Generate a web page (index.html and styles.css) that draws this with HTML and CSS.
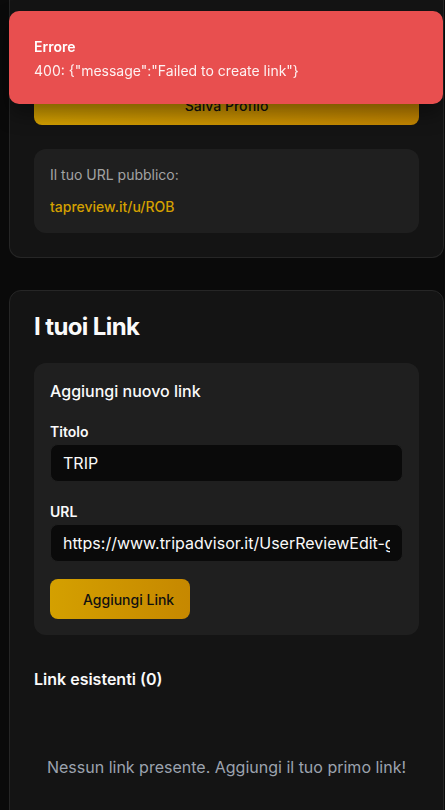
FILE: index.html
```html
<!DOCTYPE html>
<html lang="it">
<head>
<meta charset="utf-8">
<title>Dashboard</title>
<link rel="stylesheet" href="styles.css">
</head>
<body>
<main class="page">
  <section class="card card-top">
    <button class="btn-save" type="button">Salva Profilo</button>
    <div class="url-box">
      <p class="url-label">Il tuo URL pubblico:</p>
      <a class="url-link" href="#">tapreview.it/u/ROB</a>
    </div>
  </section>

  <section class="card card-links">
    <h2 class="card-title">I tuoi Link</h2>
    <div class="add-box">
      <h3 class="add-title">Aggiungi nuovo link</h3>
      <div class="field">
        <label class="field-label">Titolo</label>
        <input class="field-input" type="text" value="TRIP">
      </div>
      <div class="field">
        <label class="field-label">URL</label>
        <input class="field-input" type="text" value="https://www.tripadvisor.it/UserReviewEdit-g187791">
      </div>
      <button class="btn-add" type="button"><span class="btn-icon"></span>Aggiungi Link</button>
    </div>
    <h3 class="exist-title">Link esistenti (0)</h3>
    <p class="empty">Nessun link presente. Aggiungi il tuo primo link!</p>
  </section>
</main>

<div class="toast">
  <div class="toast-title">Errore</div>
  <div class="toast-msg">400: {"message":"Failed to create link"}</div>
</div>
</body>
</html>
```

FILE: styles.css
```css
* { box-sizing: border-box; }
html, body { margin: 0; padding: 0; }
body {
  background: #0a0a0a;
  font-family: Inter, "Noto Sans", sans-serif;
  color: #fafafa;
  overflow: hidden;
  height: 810px;
}
.page {
  padding: 0 1px 0 9px;
  display: flex;
  flex-direction: column;
  gap: 32px;
}
.card {
  background: #141414;
  border: 1px solid #262626;
  border-radius: 12px;
  padding: 24px;
}
.card-top {
  border-top: none;
  border-radius: 0 0 12px 12px;
  padding-top: 85px;
  display: flex;
  flex-direction: column;
  gap: 24px;
}
.btn-save {
  height: 40px;
  border: none;
  border-radius: 8px;
  background: linear-gradient(90deg, #d4a000, #c48600);
  color: #111;
  font-family: inherit;
  font-size: 14px;
  font-weight: 500;
}
.url-box {
  background: #1f1f1f;
  border-radius: 12px;
  padding: 16px;
  display: flex;
  flex-direction: column;
}
.url-label {
  margin: 0 0 12px;
  font-size: 14px;
  line-height: 20px;
  color: #a3a3a3;
}
.url-link {
  font-size: 14px;
  line-height: 20px;
  font-weight: 500;
  color: #d4a000;
  text-decoration: none;
}
.card-links { padding-top: 20px; }
.card-title {
  margin: 0 0 20px;
  font-size: 24px;
  line-height: 32px;
  font-weight: 700;
  letter-spacing: -0.6px;
}
.add-box {
  background: #1f1f1f;
  border-radius: 12px;
  padding: 16px;
  display: flex;
  flex-direction: column;
}
.add-title {
  margin: 0 0 19px;
  font-size: 16px;
  line-height: 24px;
  font-weight: 500;
}
.field {
  display: flex;
  flex-direction: column;
  gap: 2px;
  margin-bottom: 20px;
}
.field + .field { margin-bottom: 17px; }
.field-label {
  font-size: 14px;
  line-height: 20px;
  font-weight: 600;
}
.field-input {
  height: 38px;
  border: 1px solid #1f1f1f;
  border-radius: 8px;
  background: #0a0a0a;
  color: #fafafa;
  font-family: inherit;
  font-size: 16px;
  padding: 0 12px;
  outline: none;
  width: 100%;
}
.btn-add {
  align-self: flex-start;
  height: 40px;
  border: none;
  border-radius: 8px;
  background: linear-gradient(90deg, #d4a000, #c68800);
  color: #111;
  font-family: inherit;
  font-size: 14px;
  font-weight: 500;
  padding: 0 16px 0 17px;
  display: flex;
  align-items: center;
  gap: 0;
}
.btn-icon {
  display: inline-block;
  width: 16px;
  height: 16px;
}
.exist-title {
  margin: 32px 0 16px;
  font-size: 16px;
  line-height: 24px;
  font-weight: 600;
}
.empty {
  margin: 0;
  padding: 48px 0 32px;
  text-align: center;
  font-size: 16px;
  line-height: 24px;
  color: #9ca3af;
}
.toast {
  position: fixed;
  top: 11px;
  left: 9px;
  right: 2px;
  background: #e84f4f;
  border-radius: 10px;
  padding: 26px 25px 23px;
  box-shadow: 0 10px 20px rgba(0,0,0,0.4);
}
.toast-title {
  font-size: 14px;
  line-height: 20px;
  font-weight: 600;
  color: #fff;
}
.toast-msg {
  margin-top: 4px;
  font-size: 14px;
  line-height: 20px;
  color: rgba(255,255,255,0.92);
}
```
